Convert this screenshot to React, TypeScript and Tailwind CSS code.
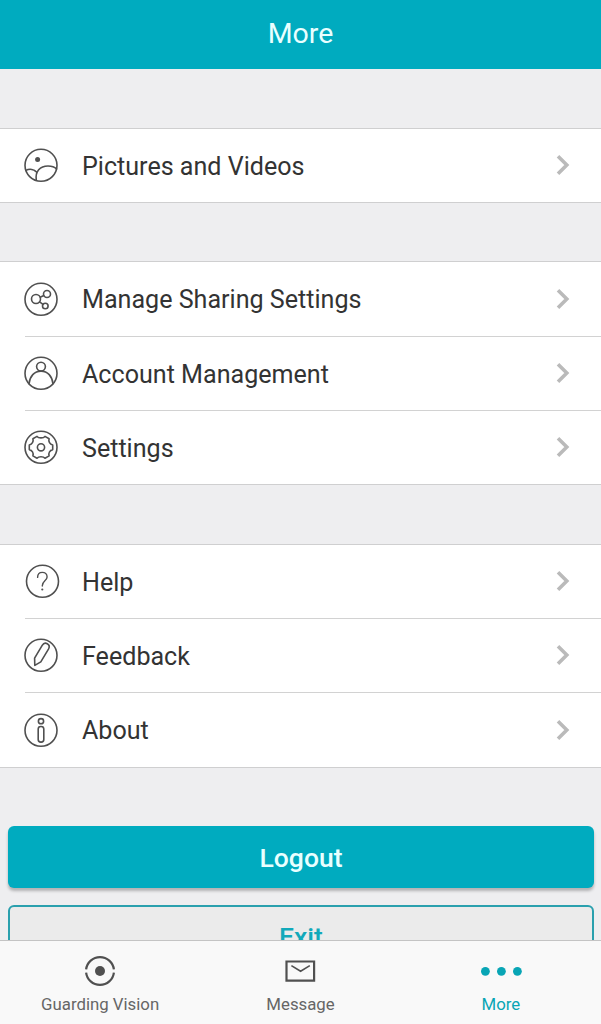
import type { ReactNode } from 'react'

function RoundIcon({ children, className = '' }: { children: ReactNode; className?: string }) {
  return (
    <svg
      viewBox="0 0 36 36"
      fill="none"
      stroke="currentColor"
      strokeWidth="1.6"
      strokeLinecap="round"
      strokeLinejoin="round"
      className={`size-9 shrink-0 text-[#505050] ${className}`}
    >
      <circle cx="18" cy="18.3" r="16" />
      {children}
    </svg>
  )
}

const icons = {
  pictures: (
    <RoundIcon>
      <circle cx="14.6" cy="12.4" r="2.5" fill="currentColor" stroke="none" />
      <path d="M13.3 33.3C12 24.5 17 19 25 19c3.8 0 6.8 1.2 8.5 3M2.8 23.4c3.8-2 8.3-1.2 11 1.8" />
    </RoundIcon>
  ),
  sharing: (
    <RoundIcon>
      <circle cx="13" cy="18" r="4.5" />
      <circle cx="24" cy="13" r="3.5" />
      <circle cx="22.3" cy="25" r="2.8" />
      <path d="m17.2 16.2 3.6-1.7M16.6 20.8l3.4 2.5" />
    </RoundIcon>
  ),
  account: (
    <RoundIcon>
      <circle cx="18" cy="11.6" r="4.4" />
      <path d="M6 28.8C6.8 21.3 11.3 16.1 18 16.1s11.2 5.2 12 12.7" />
    </RoundIcon>
  ),
  settings: (
    <RoundIcon>
      <circle cx="18" cy="18.3" r="3.6" />
      <path d="M14 7.4c1.6 2 6.4 2 8 0l4.1 2.3c-.9 2.9.8 5.6 3.6 6.3v4.6c-2.8.7-4.5 3.4-3.6 6.3L22 29.2c-1.6-2-6.4-2-8 0l-4.1-2.3c.9-2.9-.8-5.6-3.6-6.3V16c2.8-.7 4.5-3.4 3.6-6.3z" />
    </RoundIcon>
  ),
  help: (
    <RoundIcon className="translate-x-[1.5px]">
      <path d="M13.1 14.4c0-3.1 2-5 4.7-5s4.8 1.8 4.8 4.5c0 3.8-4.8 4.2-4.8 8.8v.4" strokeWidth="1.4" />
      <circle cx="17.8" cy="26.5" r="1.1" fill="currentColor" stroke="none" />
    </RoundIcon>
  ),
  feedback: (
    <RoundIcon>
      <path d="m11.6 21.2 7.6-12.9c1.3-2.1 3.3-2.5 5.1-1.5s2.4 3 1.3 5.1l-7.8 13-6 3.5z" />
    </RoundIcon>
  ),
  about: (
    <RoundIcon>
      <circle cx="18" cy="9.2" r="2.6" />
      <rect x="15.2" y="14.5" width="5.6" height="15.6" rx="2.6" />
    </RoundIcon>
  ),
}

function Row({ icon, label, className = '' }: { icon: ReactNode; label: string; className?: string }) {
  return (
    <div className={`flex items-center pb-px ${className}`}>
      {icon}
      <span className="ml-[23px] flex-1 pt-[3px] text-[25.1px] leading-8 text-[#333]">{label}</span>
      <svg viewBox="0 0 16 24" fill="none" stroke="#bababa" strokeWidth="3.6" className="mr-[30px] h-6 w-4">
        <path d="m3 3.2 8.8 8.8L3 20.8" />
      </svg>
    </div>
  )
}

function Group({ children, className = '' }: { children: ReactNode; className?: string }) {
  return <section className={`border-y border-[#cfcfd0] bg-white pl-[23px] ${className}`}>{children}</section>
}

function Divider() {
  return <div className="ml-0.5 h-px bg-[#d2d2d2]" />
}

function Tab({ icon, label, active = false }: { icon: ReactNode; label: string; active?: boolean }) {
  return (
    <div className={`flex flex-col items-center ${active ? 'text-[#08a5b5]' : 'text-[#666]'}`}>
      <div className="mt-3 flex h-9 items-center">{icon}</div>
      <span className="mt-[5px] text-[16.8px] leading-5">{label}</span>
    </div>
  )
}

export default function App() {
  return (
    <div className="flex h-screen flex-col overflow-hidden bg-[#eeeef0] font-['Roboto',sans-serif]">
      <header className="flex h-[69px] shrink-0 items-center justify-center bg-[#00abbf] text-[28.5px] text-[#e9ffff]">
        <h1>More</h1>
      </header>

      <main className="min-h-0 flex-1 overflow-hidden">
        <Group className="mt-[59px]">
          <Row icon={icons.pictures} label="Pictures and Videos" className="h-[73px]" />
        </Group>

        <Group className="mt-[58px]">
          <Row icon={icons.sharing} label="Manage Sharing Settings" className="h-[74px]" />
          <Divider />
          <Row icon={icons.account} label="Account Management" className="h-[73px]" />
          <Divider />
          <Row icon={icons.settings} label="Settings" className="h-[73px]" />
        </Group>

        <Group className="mt-[59px]">
          <Row icon={icons.help} label="Help" className="h-[73px]" />
          <Divider />
          <Row icon={icons.feedback} label="Feedback" className="h-[73px]" />
          <Divider />
          <Row icon={icons.about} label="About" className="h-[74px]" />
        </Group>

        <div className="mt-[58px] pr-[7px] pl-2">
          <button className="block h-[62px] w-full rounded-md bg-[#00abbf] pt-px text-[26.5px] font-medium text-[#e9ffff] shadow-[0_3px_3px_rgba(0,0,0,0.25)]">
            Logout
          </button>
          <button className="mt-[17px] block h-[62px] w-full rounded-md border-2 border-[#2aa0ae] bg-[#ebebeb] pt-0.5 text-[26.5px] font-medium text-[#12a9ba]">
            Exit
          </button>
        </div>
      </main>

      <nav className="grid h-[84px] shrink-0 grid-cols-3 border-t border-[#c4c4c4] bg-[#f9f9f9]">
        <Tab
          label="Guarding Vision"
          icon={
            <svg viewBox="0 0 32 32" fill="none" stroke="#505050" strokeWidth="2.2" className="size-8">
              <path d="M2.1 14.4a14 14 0 0 1 27.8 0M2.1 17.6a14 14 0 0 0 27.8 0" />
              <circle cx="16" cy="16" r="5" fill="#505050" stroke="none" />
            </svg>
          }
        />
        <Tab
          label="Message"
          icon={
            <svg viewBox="0 0 32 24" fill="none" stroke="#505050" strokeWidth="2.2" className="h-6 w-8">
              <path d="M2.5 2.5h27.6v19.2H2.5z" />
              <path d="m7.4 6.6 9.2 5.6 9.2-5.6" strokeWidth="1.6" />
            </svg>
          }
        />
        <Tab
          active
          label="More"
          icon={
            <svg viewBox="0 0 42 10" fill="currentColor" className="h-2.5 w-[42px]">
              <circle cx="5.4" cy="5.3" r="4.4" />
              <circle cx="21.4" cy="5.3" r="4.4" />
              <circle cx="37.4" cy="5.3" r="4.4" />
            </svg>
          }
        />
      </nav>
    </div>
  )
}
